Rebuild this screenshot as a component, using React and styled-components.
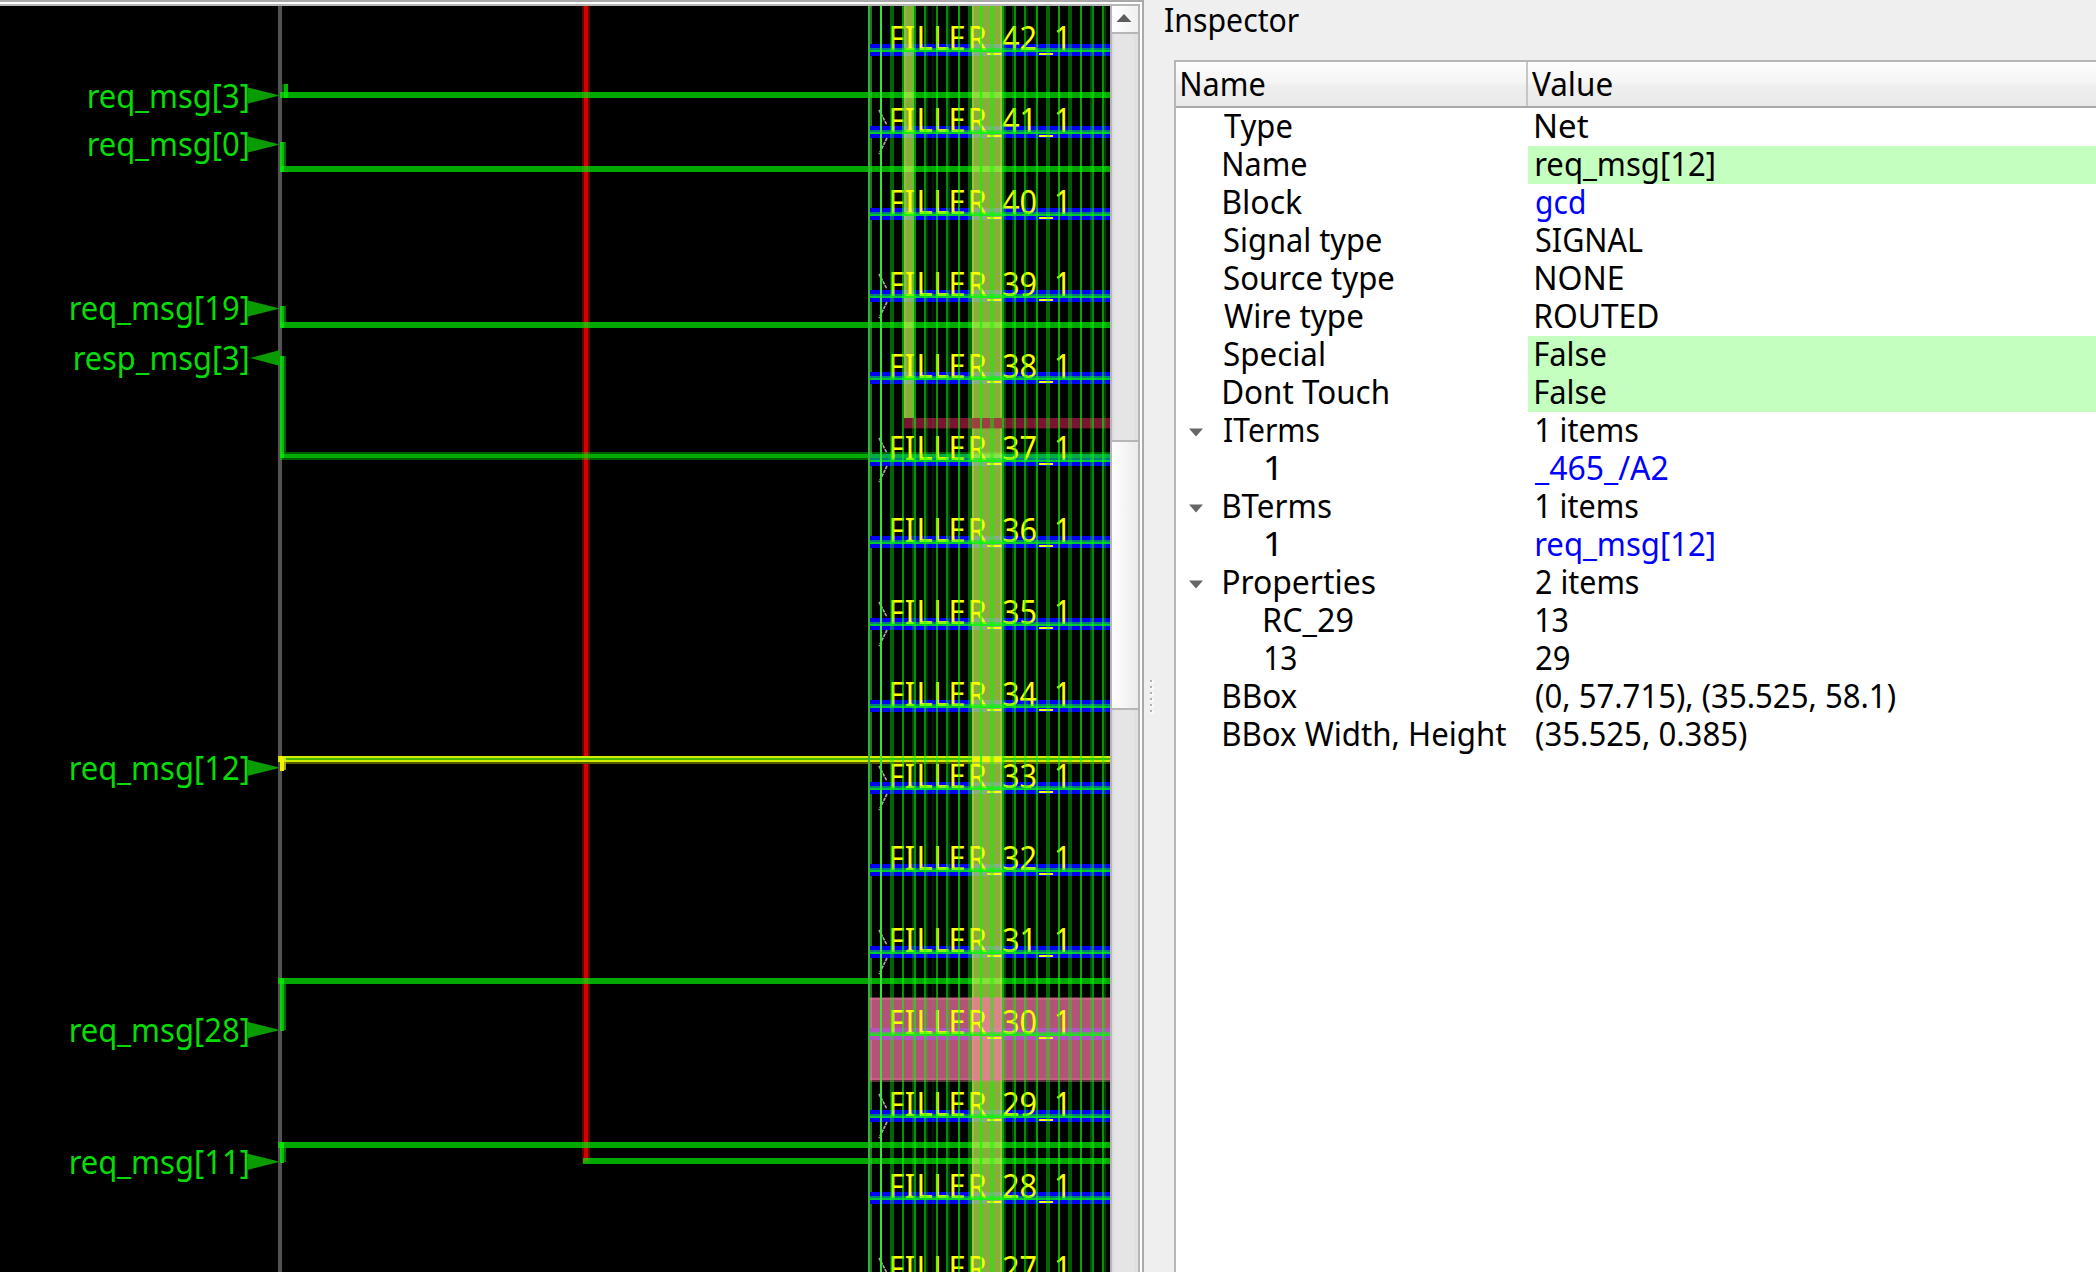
import React from 'react';
import styled, { createGlobalStyle } from 'styled-components';

const FONT = '"Noto Sans", "Open Sans", sans-serif';
const SIZE = 33.5;

const Global = createGlobalStyle`
  html, body { margin: 0; padding: 0; background: #efefef; }
  body { font-family: ${FONT}; font-size: ${SIZE}px; color: #000; overflow: hidden; }
  * { box-sizing: border-box; }
`;

/* Condenses a label so its ink spans exactly `width` pixels. */
let ctx;
function fit(text, width) {
  if (!ctx) ctx = document.createElement('canvas').getContext('2d');
  ctx.font = `${SIZE}px ${FONT}`;
  const m = ctx.measureText(text);
  const scale = width / (m.actualBoundingBoxRight + m.actualBoundingBoxLeft);
  return { scale, shift: m.actualBoundingBoxLeft * scale };
}

const Ink = styled.span`
  display: inline-block;
  white-space: pre;
  transform-origin: 0 50%;
  line-height: 34px;
`;

function Label({ text, width }) {
  const { scale, shift } = fit(text, width);
  return <Ink style={{ transform: `translateX(${shift}px) scaleX(${scale})` }}>{text}</Ink>;
}

const Window = styled.div`
  display: flex;
  width: 2096px;
  height: 1272px;
  overflow: hidden;
  background: #efefef;
`;

const ViewFrame = styled.div`
  display: flex;
  width: 1144px;
  flex: none;
  background: #fff;
  border-top: 2px solid #a9a9a9;
  border-right: 2px solid #a9a9a9;
  padding: 2px 2px 0 0;
`;

const View = styled.div`
  display: flex;
  flex: 1;
  border-top: 2px solid #b6b6b6;
  border-right: 2px solid #b6b6b6;
`;

const Layout = styled.svg`
  display: block;
  flex: none;
  background: #000;
  font-family: ${FONT};
  font-size: ${SIZE}px;
`;

const ScrollBar = styled.div`
  display: flex;
  flex-direction: column;
  flex: 1;
  border-left: 2px solid #b6b6b6;
  background: linear-gradient(90deg, #dcdcdc 0 2px, #e5e5e5 2px 22px, #e0e0e0 22px);
`;

const ScrollButton = styled.div`
  height: 28px;
  display: flex;
  padding: 8px 0 0 4px;
  border-bottom: 2px solid #b6b6b6;
  background: linear-gradient(90deg, #fff, #f0f0f0);
`;

const ScrollGap = styled.div`
  height: 406px;
`;

const ScrollThumb = styled.div`
  height: 270px;
  border-top: 2px solid #b6b6b6;
  border-bottom: 2px solid #b6b6b6;
  background: linear-gradient(90deg, #fdfdfd, #f5f5f5 50%, #ebebeb);
`;

const Splitter = styled.div`
  width: 16px;
  flex: none;
  display: flex;
  flex-direction: column;
  gap: 2px;
  padding: 680px 0 0 6px;
`;

const Dot = styled.div`
  width: 4px;
  height: 4px;
  background: #f8f8f8 linear-gradient(#b0b0b0, #b0b0b0) 0 0 / 2px 2px no-repeat;
`;

const Dock = styled.div`
  flex: 1;
  display: flex;
  flex-direction: column;
  min-width: 0;
`;

const DockTitle = styled.div`
  height: 60px;
  padding: 2px 0 0 5px;
  line-height: 34px;
`;

const Tree = styled.div`
  flex: 1;
  margin-left: 14px;
  border-top: 2px solid #b6b6b6;
  border-left: 2px solid #b6b6b6;
  background: #fff;
`;

const Header = styled.div`
  display: flex;
  height: 46px;
  border-bottom: 2px solid #a8a8a8;
  background: linear-gradient(#fdfdfd, #f4f4f4 50%, #efefef 52%, #e9e9e9);
`;

const HeaderCell = styled.div`
  width: ${(p) => (p.$last ? 'auto' : '352px')};
  flex: ${(p) => (p.$last ? 1 : 'none')};
  border-right: ${(p) => (p.$last ? '0' : '2px solid #c6c6c6')};
  padding: 4px 0 0 ${(p) => (p.$last ? 4 : 6)}px;
  line-height: 34px;
`;

const Row = styled.div`
  display: flex;
  height: 38px;
  line-height: 34px;
`;

const NameCell = styled.div`
  width: 352px;
  flex: none;
  display: flex;
`;

const Indent = styled.div`
  width: ${(p) => (p.$deep ? 88.5 : 47.7)}px;
  flex: none;
  padding: 12px 0 0 13px;
  line-height: 0;
`;

const ValueCell = styled.div`
  flex: 1;
  padding-left: ${(p) => (p.$flush ? 6 : 7.5)}px;
  background: ${(p) => (p.$editable ? '#c4ffc0' : 'transparent')};
  color: ${(p) => (p.$link ? '#0000ff' : '#000')};
`;

const rows = [
  { n: 'Type', nw: 68, v: 'Net', vw: 52.5 },
  { n: 'Name', nw: 82.7, v: 'req_msg[12]', vw: 178.2, edit: true },
  { n: 'Block', nw: 78.3, v: 'gcd', vw: 48, link: true },
  { n: 'Signal type', nw: 157.5, v: 'SIGNAL', vw: 106.5 },
  { n: 'Source type', nw: 170, v: 'NONE', vw: 87 },
  { n: 'Wire type', nw: 139, v: 'ROUTED', vw: 122 },
  { n: 'Special', nw: 99.5, v: 'False', vw: 70, edit: true },
  { n: 'Dont Touch', nw: 163.5, v: 'False', vw: 70, edit: true },
  { n: 'ITerms', nw: 95, v: '1 items', vw: 102, open: true },
  { n: '1', nw: 11, deep: true, v: '_465_/A2', vw: 133.7, link: true, flush: true },
  { n: 'BTerms', nw: 107, v: '1 items', vw: 102, open: true },
  { n: '1', nw: 11, deep: true, v: 'req_msg[12]', vw: 178.2, link: true },
  { n: 'Properties', nw: 151, v: '2 items', vw: 102.5, open: true },
  { n: 'RC_29', nw: 87.8, deep: true, v: '13', vw: 32 },
  { n: '13', nw: 31.5, deep: true, v: '29', vw: 33.5 },
  { n: 'BBox', nw: 73.5, v: '(0, 57.715), (35.525, 58.1)', vw: 359 },
  { n: 'BBox Width, Height', nw: 282.5, v: '(35.525, 0.385)', vw: 210.5 },
];

const pins = [
  { t: 'req_msg[3]', x: 88.5, y: 107.7, tip: 95.5 },
  { t: 'req_msg[0]', x: 88.5, y: 155.7, tip: 144.5 },
  { t: 'req_msg[19]', x: 70.5, y: 320, tip: 308.5 },
  { t: 'resp_msg[3]', x: 74.5, y: 370, tip: 358, out: true },
  { t: 'req_msg[12]', x: 70.5, y: 780, tip: 767.7 },
  { t: 'req_msg[28]', x: 70.5, y: 1042, tip: 1030 },
  { t: 'req_msg[11]', x: 70.5, y: 1174, tip: 1161.7 },
];

/* [x, y, width, height, opacity] */
const nets = [
  [280, 92, 830, 6, 0.7], [282, 84, 2, 12, 0.3], [284, 84, 4, 14, 0.75],
  [280, 166, 830, 6, 0.7], [280, 142, 4, 30, 0.8], [284, 142, 2, 24, 0.45],
  [280, 322, 830, 6, 0.7], [280, 306, 4, 22, 0.8], [284, 306, 2, 16, 0.45],
  [280, 452, 830, 2, 0.38], [280, 454, 830, 4, 0.72], [280, 458, 590, 2, 0.38],
  [280, 356, 4, 102, 0.8], [284, 356, 2, 96, 0.4],
  [278, 978, 832, 6, 0.7], [280, 978, 4, 53, 0.8], [284, 984, 2, 46, 0.45],
  [278, 1142, 832, 6, 0.7], [280, 1142, 4, 21, 0.8], [284, 1148, 2, 14, 0.45],
  [583, 1158, 527, 6, 0.7],
];

/* [x, width, opacity] */
const tracks = [
  [890, 4, 0.4], [902, 2, 0.6], [912, 2, 0.25], [914, 2, 0.6], [924, 2, 0.57], [926, 2, 0.18],
  [932, 2, 0.1], [936, 2, 0.58], [946, 2, 0.55], [948, 2, 0.22], [958, 2, 0.66], [968, 4, 0.4],
  [980, 2, 0.75], [990, 4, 0.42], [1002, 2, 0.66], [1004, 2, 0.25], [1012, 2, 0.2], [1014, 2, 0.57],
  [1024, 2, 0.55], [1026, 2, 0.15], [1034, 2, 0.1], [1036, 2, 0.62], [1046, 4, 0.4], [1058, 2, 0.66],
  [1068, 4, 0.36], [1080, 2, 0.66], [1090, 2, 0.3], [1092, 2, 0.55], [1102, 2, 0.6], [1104, 2, 0.22],
];

const fillers = Array.from({ length: 16 }, (_, i) => ({ n: 42 - i, y: 44 + 82 * i }));
const GLYPH_X = [896.5, 910, 924.5, 941, 957, 977, 994, 1010.7, 1028.3, 1045.8, 1062.8];
const GLYPH_SCALE = 0.92;

function Pin({ t, x, y, tip, out }) {
  const { scale, shift } = fit(t, 248 - x);
  const tri = out
    ? `M250 ${tip}L280 ${tip - 8}V${tip + 8}Z`
    : `M248 ${tip - 8}L280 ${tip}L248 ${tip + 8}Z`;
  return (
    <g>
      <path d={tri} fill="#0a9b00" />
      <text transform={`translate(${x + shift} ${y}) scale(${scale} 1)`} fill="#08dc08">{t}</text>
    </g>
  );
}

function ChipLayout() {
  return (
    <Layout width="1110" height="1266" viewBox="0 6 1110 1266">
      <rect x="278" y="0" width="4" height="1272" fill="#535353" />
      <rect x="870" y="0" width="2" height="1272" fill="#2d702d" />
      {fillers.map(({ n, y }) => (
        <g key={n}>
          <rect x="870" y={y} width="240" height="12" fill="#0000f6" />
          {n % 2 === 1 && (
            <path
              d={`M879 ${y - 16}L887 ${y - 1}M887 ${y + 12}L879 ${y + 28}`}
              stroke="#a8a8a8" strokeWidth="1.7" strokeDasharray="3.4 0.8" fill="none"
            />
          )}
        </g>
      ))}
      <rect x="582" y="0" width="8" height="1163" fill="#5c0000" />
      <rect x="584" y="0" width="4" height="1161" fill="#d40000" />
      {nets.map(([x, y, w, h, o]) => (
        <rect key={`${x}-${y}-${w}`} x={x} y={y} width={w} height={h} fill="#00f000" fillOpacity={o} />
      ))}
      <rect x="278" y="756" width="832" height="8" fill="#555a00" />
      <rect x="278" y="756" width="832" height="6" fill="#d2ec00" />
      <rect x="286" y="758" width="824" height="2" fill="#46b400" />
      <rect x="280" y="756" width="4" height="15" fill="#f4f000" />
      <rect x="284" y="762" width="2" height="8" fill="#a8a400" />

      <rect x="904" y="0" width="10" height="418" fill="#c2f650" fillOpacity="0.7" />
      <rect x="904" y="0" width="2" height="418" fill="#c2f650" fillOpacity="0.2" />
      <rect x="972" y="0" width="30" height="1272" fill="#c2f650" fillOpacity="0.7" />
      <rect x="972" y="0" width="2" height="1272" fill="#c2f650" fillOpacity="0.3" />
      <rect x="1000" y="0" width="2" height="1272" fill="#c2f650" fillOpacity="0.3" />
      <rect x="972" y="757" width="30" height="5" fill="#f2f400" />
      <rect x="904" y="418" width="206" height="10" fill="#a31b43" fillOpacity="0.75" />
      <rect x="904" y="428" width="206" height="1" fill="#a31b43" fillOpacity="0.3" />
      <rect x="870" y="997" width="240" height="85" fill="#ff75a9" fillOpacity="0.38" />
      <rect x="870" y="998" width="240" height="82" fill="#ff75a9" fillOpacity="0.53" />
      <rect x="870" y="998" width="240" height="2" fill="#ff75a9" fillOpacity="0.3" />
      <rect x="870" y="1078" width="240" height="2" fill="#ff75a9" fillOpacity="0.3" />

      {fillers.map(({ n, y }) => (
        <text
          key={n}
          x={GLYPH_X.map((x) => x / GLYPH_SCALE).join(' ')}
          y={y + 6}
          textAnchor="middle"
          transform={`scale(${GLYPH_SCALE} 1)`}
          fill="#ffff00"
        >
          {`FILLER_${n}_1`}
        </text>
      ))}

      {fillers.map(({ n, y }) => (
        <g key={n} fill="#00ff00">
          <rect x="870" y={y + 4} width="240" height="2" fillOpacity="0.5" />
          <rect x="870" y={y + 6} width="240" height="2" fillOpacity="0.78" />
        </g>
      ))}
      {tracks.map(([x, w, o]) => (
        <rect key={x} x={x} y="0" width={w} height="1272" fill="#00ff00" fillOpacity={o} />
      ))}
      <rect x="868" y="0" width="2" height="1272" fill="#32b432" />
      <rect x="880" y="0" width="2" height="1272" fill="#32e632" />
      {pins.map((p) => <Pin key={p.t} {...p} />)}
    </Layout>
  );
}

export default function App() {
  return (
    <Window>
      <Global />
      <ViewFrame>
        <View>
          <ChipLayout />
          <ScrollBar>
            <ScrollButton>
              <svg width="16" height="8" viewBox="0 0 16 8"><path d="M8 0L15.5 8H.5Z" fill="#5c5c5c" /></svg>
            </ScrollButton>
            <ScrollGap />
            <ScrollThumb />
          </ScrollBar>
        </View>
      </ViewFrame>
      <Splitter>
        {[0, 1, 2, 3, 4, 5].map((i) => <Dot key={i} />)}
      </Splitter>
      <Dock>
        <DockTitle><Label text="Inspector" width={134.5} /></DockTitle>
        <Tree>
          <Header>
            <HeaderCell><Label text="Name" width={83} /></HeaderCell>
            <HeaderCell $last><Label text="Value" width={80.3} /></HeaderCell>
          </Header>
          {rows.map((r, i) => (
            <Row key={i}>
              <NameCell>
                <Indent $deep={r.deep}>
                  {r.open && (
                    <svg width="14" height="9" viewBox="0 0 14 9"><path d="M0 .5H14L7 8.5Z" fill="#666" /></svg>
                  )}
                </Indent>
                <Label text={r.n} width={r.nw} />
              </NameCell>
              <ValueCell $editable={r.edit} $link={r.link} $flush={r.flush}>
                <Label text={r.v} width={r.vw} />
              </ValueCell>
            </Row>
          ))}
        </Tree>
      </Dock>
    </Window>
  );
}
